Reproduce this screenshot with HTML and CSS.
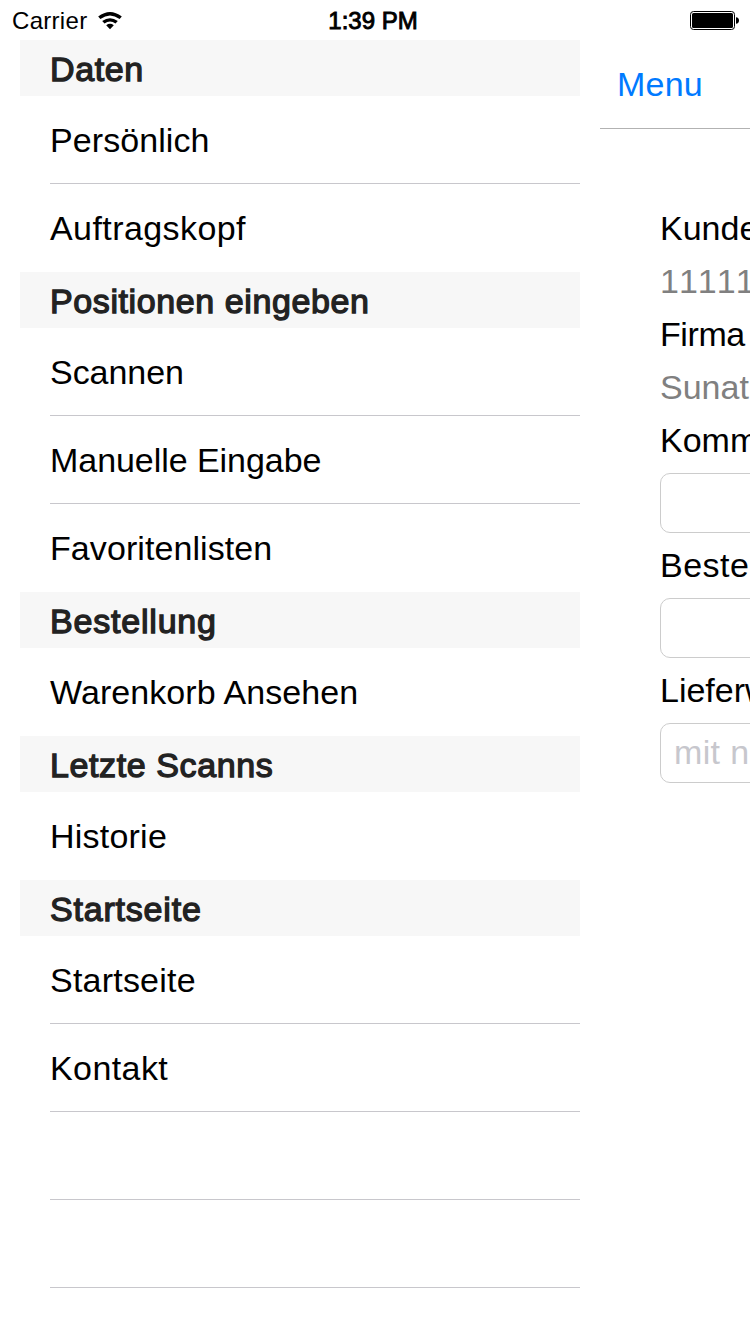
FILE: index.html
```html
<!DOCTYPE html>
<html lang="de">
<head>
<meta charset="utf-8">
<title>Menu</title>
<link rel="stylesheet" href="styles.css">
</head>
<body>
<header class="status">
  <div class="carrier"><span class="carrier-name">Carrier</span>
    <svg class="wifi" viewBox="0 0 26 20" width="26" height="20"><path d="M1.200 5.600Q13-3.400 24.800 5.600L22.600 8Q13 .8 3.400 8zM5.200 10.100Q13 4.200 20.800 10.100L18.500 12.500Q13 8.600 7.500 12.500zM9.200 14.300Q13 11.400 16.800 14.300L13 18.200z"/></svg>
  </div>
  <span class="clock">1:39 PM</span>
  <svg class="battery" viewBox="0 0 49 19" width="49" height="19"><rect x=".5" y=".5" width="44" height="18" rx="3" fill="none" stroke="#000"/><rect x="2" y="2" width="41" height="15" rx="1.500"/><path d="M46 6.200c4 0 4 6.600 0 6.600z"/></svg>
</header>
<main class="screen">
  <nav class="menu">
    <h2 class="section">Daten</h2>
    <ul class="list"><li class="row">Persönlich</li><li class="row loose">Auftragskopf</li></ul>
    <h2 class="section">Positionen eingeben</h2>
    <ul class="list"><li class="row tight">Scannen</li><li class="row tight">Manuelle Eingabe</li><li class="row">Favoritenlisten</li></ul>
    <h2 class="section wide">Bestellung</h2>
    <ul class="list"><li class="row">Warenkorb Ansehen</li></ul>
    <h2 class="section">Letzte Scanns</h2>
    <ul class="list"><li class="row medium">Historie</li></ul>
    <h2 class="section wide">Startseite</h2>
    <ul class="list open"><li class="row medium">Startseite</li><li class="row loose">Kontakt</li><li class="row"></li><li class="row"></li></ul>
  </nav>
  <section class="detail">
    <div class="navbar">Menu</div>
    <div class="form">
      <div class="label">Kundennummer</div>
      <div class="value number">11111</div>
      <div class="label firm">Firma</div>
      <div class="value">Sunatic</div>
      <div class="label">Kommission</div>
      <div class="field"></div>
      <div class="label order">Bestellnummer</div>
      <div class="field"></div>
      <div class="label">Lieferwunsch</div>
      <div class="field hint">mit nächster</div>
    </div>
  </section>
</main>
</body>
</html>
```
FILE: styles.css
```css
* { box-sizing: border-box; }
body { margin: 0; width: 750px; height: 1334px; overflow: hidden; background: #fff; color: #000; font-family: "Liberation Sans", Arial, sans-serif; font-size: 34px; }
.status { height: 40px; padding: 0 11px 0 12px; display: grid; grid-template-columns: 1fr auto 1fr; align-items: center; font-size: 24px; line-height: 40px; }
.carrier { display: flex; align-items: center; gap: 10px; }
.carrier-name { padding-top: 1px; letter-spacing: .3px; }
.clock { padding: 1px 5px 0 0; -webkit-text-stroke: .9px #000; }
.battery { justify-self: end; margin-bottom: 1px; }
.screen { display: flex; height: 1294px; }
.menu { width: 560px; margin: 0 20px; flex: none; }
.section { margin: 0; height: 56px; padding: 1px 30px 0; background: #f7f7f7; color: #222; font-size: 34px; line-height: 56px; font-weight: normal; letter-spacing: .6px; -webkit-text-stroke: 1.3px #222; }
.section.wide { letter-spacing: .8px; }
.list { margin: 0; padding: 0 0 0 30px; list-style: none; }
.row { height: 88px; line-height: 88px; border-bottom: 1px solid #c8c7cc; white-space: nowrap; letter-spacing: .08px; }
.row.tight { letter-spacing: -.05px; }
.row.medium { letter-spacing: .22px; }
.row.loose { letter-spacing: .42px; }
.list:not(.open) .row:last-child { border-bottom: 0; }
.detail { width: 150px; overflow: hidden; }
.navbar { height: 89px; border-bottom: 1px solid #b2b2b2; padding-left: 17px; line-height: 88px; color: #007aff; letter-spacing: .2px; }
.form { width: 600px; padding: 73px 60px 0; white-space: nowrap; }
.label, .value { height: 53px; line-height: 53px; }
.label.firm { letter-spacing: -.4px; }
.label.order { letter-spacing: .5px; }
.value { color: #808080; }
.value.number { font-kerning: none; }
.field { width: 480px; height: 60px; margin: 6px 0; border: 1px solid #ccc; border-radius: 10px; padding-left: 13px; line-height: 57px; color: #c7c7cd; }
.field.hint { letter-spacing: .35px; }
```
